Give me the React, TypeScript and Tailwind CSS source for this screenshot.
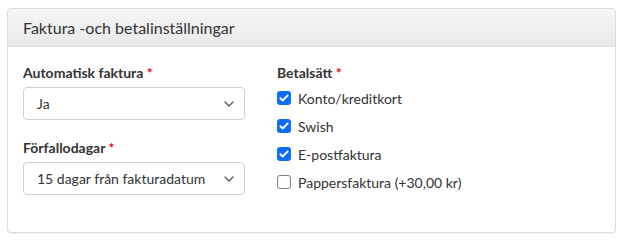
import React from "react";

const font = { fontFamily: "Lato, 'Noto Sans', sans-serif" };

function Chevron() {
  return (
    <svg width="10" height="6" viewBox="0 0 10 6" fill="none">
      <path d="M1 1l4 4 4-4" stroke="#555" strokeWidth="1.3" strokeLinecap="round" strokeLinejoin="round" />
    </svg>
  );
}

function Select({ value }: { value: string }) {
  return (
    <div className="flex h-[33px] w-[222px] items-center justify-between rounded-[4px] border border-[#cfcfcf] bg-white pl-[13px] pr-[10px] text-[14px] text-[#333]">
      <span>{value}</span>
      <Chevron />
    </div>
  );
}

function Check({ checked, label }: { checked: boolean; label: string }) {
  return (
    <div className="flex h-[20px] items-center gap-[7px]">
      {checked ? (
        <div className="flex h-[14px] w-[14px] items-center justify-center rounded-[3px] bg-[#0d6efd]">
          <svg width="10" height="8" viewBox="0 0 10 8" fill="none">
            <path d="M1.3 4.2l2.4 2.3L8.7 1.4" stroke="white" strokeWidth="1.8" strokeLinecap="round" strokeLinejoin="round" />
          </svg>
        </div>
      ) : (
        <div className="h-[14px] w-[14px] rounded-[3px] border-[1.5px] border-[#7d7d85] bg-white" />
      )}
      <span className="text-[14px] text-[#333]">{label}</span>
    </div>
  );
}

function Label({ text }: { text: string }) {
  return (
    <div className="h-[20px] text-[14px] font-bold leading-[20px] text-[#333]">
      {text} <span className="text-[#e00]">*</span>
    </div>
  );
}

export default function App() {
  return (
    <div className="h-[240px] w-[623px] bg-white pl-[7px] pt-[8px]" style={font}>
      <div className="h-[225px] w-[609px] overflow-hidden rounded-[4px] border border-[#dcdcdc] bg-white shadow-[0_1px_1px_rgba(0,0,0,0.05)]">
        <div className="flex h-[38px] items-center border-b border-[#dcdcdc] bg-gradient-to-b from-[#f6f6f6] to-[#e9e9e9] px-[15px] text-[16px] text-[#333]">
          Faktura -och betalinställningar
        </div>
        <div className="flex gap-[32px] pl-[15px] pt-[16px]">
          <div className="flex w-[222px] flex-col">
            <Label text="Automatisk faktura" />
            <div className="mt-[4px]">
              <Select value="Ja" />
            </div>
            <div className="mt-[18px]">
              <Label text="Förfallodagar" />
            </div>
            <div className="mt-[4px]">
              <Select value="15 dagar från fakturadatum" />
            </div>
          </div>
          <div className="flex flex-col">
            <Label text="Betalsätt" />
            <div className="mt-[5px] flex flex-col gap-[8px]">
              <Check checked label="Konto/kreditkort" />
              <Check checked label="Swish" />
              <Check checked label="E-postfaktura" />
              <Check checked={false} label="Pappersfaktura (+30,00 kr)" />
            </div>
          </div>
        </div>
      </div>
    </div>
  );
}
